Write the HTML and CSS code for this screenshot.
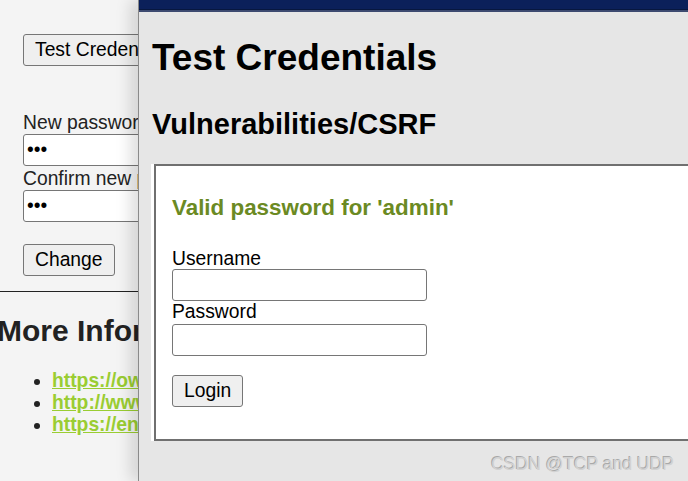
FILE: index.html
```html
<!DOCTYPE html>
<html>
<head>
<meta charset="utf-8">
<link rel="stylesheet" href="styles.css">
</head>
<body>
<div class="page">
  <div class="form">
    <button class="btn btn-test">Test Credentials</button>
    <label class="lbl lbl-first">New password:</label>
    <input class="inp" type="password" value="abc">
    <label class="lbl">Confirm new password:</label>
    <input class="inp" type="password" value="abc">
    <button class="btn btn-change">Change</button>
  </div>
  <hr class="rule">
  <h2 class="more">More Information</h2>
  <ul class="links">
    <li><a href="#">https://owasp.org/www-community/attacks/csrf</a></li>
    <li><a href="#">http://www.cgisecurity.com/csrf-faq.html</a></li>
    <li><a href="#">https://en.wikipedia.org/wiki/Cross-site_request_forgery</a></li>
  </ul>
</div>

<div class="popup">
  <div class="topbar"></div>
  <div class="popup-body">
    <h1 class="title">Test Credentials</h1>
    <h2 class="sub">Vulnerabilities/CSRF</h2>
    <div class="area">
      <div class="ok">Valid password for 'admin'</div>
      <label class="lbl lbl-user">Username</label>
      <input class="inp inp-user" type="text">
      <label class="lbl lbl-pass">Password</label>
      <input class="inp inp-pass" type="password">
      <button class="btn btn-login">Login</button>
    </div>
  </div>
  <div class="watermark">CSDN @TCP and UDP</div>
</div>
</body>
</html>
```

FILE: styles.css
```css
html, body {
  margin: 0;
  padding: 0;
  height: 100%;
}
body {
  background: #f4f4f4;
  font-family: "Liberation Sans", Arial, sans-serif;
  font-size: 19.3px;
  color: #222;
  overflow: hidden;
  position: relative;
}
.page {
  padding-top: 34px;
}
.form {
  display: flex;
  flex-direction: column;
  align-items: flex-start;
  padding-left: 23px;
}
.btn {
  font-family: "Liberation Sans", Arial, sans-serif;
  font-size: 19.3px;
  color: #000;
  height: 32px;
  padding: 0 11px;
  background: #efefef;
  border: 1px solid #767676;
  border-radius: 3px;
  white-space: nowrap;
}
.lbl {
  display: block;
  line-height: 20px;
  height: 20px;
  margin-top: 3px;
  white-space: nowrap;
}
.lbl-first { margin-top: 47px; }
.inp {
  display: block;
  box-sizing: border-box;
  width: 255px;
  height: 32px;
  margin-top: 1px;
  padding: 0 3px;
  font-family: "Liberation Sans", Arial, sans-serif;
  font-size: 19.3px;
  background: #fff;
  border: 1px solid #767676;
  border-radius: 3px;
}
.btn-change { margin-top: 22px; }
.rule {
  margin: 15px 0 0 0;
  border: 0;
  border-top: 1px solid #222;
  height: 0;
}
.more {
  margin: 22px 0 0 -3px;
  font-size: 30px;
  line-height: 34px;
  font-weight: bold;
  color: #222;
  white-space: nowrap;
}
.links {
  margin: 22px 0 0 0;
  padding-left: 52px;
  line-height: 22px;
}
.links a {
  color: #9acd32;
  font-weight: bold;
  white-space: nowrap;
}

.popup {
  position: absolute;
  left: 138px;
  top: 0;
  right: 0;
  bottom: 0;
  background: #e6e6e6;
  border-left: 1px solid #8a8a8a;
  box-shadow: -8px 0 14px rgba(0, 0, 0, 0.13);
  overflow: hidden;
}
.topbar {
  height: 9px;
  background: #0b205a;
  border-bottom: 1px solid #07173f;
  box-shadow: 0 2px 0 #3d4a70;
}
.popup-body {
  padding: 27px 0 0 13px;
}
.title {
  margin: 0;
  font-size: 37px;
  line-height: 42px;
  font-weight: bold;
  color: #000;
  white-space: nowrap;
}
.sub {
  margin: 28px 0 0 0;
  font-size: 29px;
  line-height: 34px;
  font-weight: bold;
  color: #000;
  white-space: nowrap;
}
.area {
  margin: 23px -40px 0 2px;
  padding: 29px 0 32px 16px;
  background: #fff;
  border: 2px solid #707070;
  box-shadow: -3px 0 0 #fff;
}
.ok {
  font-size: 22.4px;
  line-height: 26px;
  font-weight: bold;
  color: #6b8a23;
}
.lbl-user { margin-top: 28px; color: #000; }
.inp-user { margin-top: 0; }
.lbl-pass { margin-top: 1px; color: #000; }
.inp-pass { margin-top: 2px; }
.btn-login { margin-top: 19px; }
.watermark {
  position: absolute;
  right: 14px;
  top: 454px;
  font-size: 17.5px;
  color: #d2d2d2;
  text-shadow: -1px -1px 0 #a9a9a9;
  white-space: nowrap;
}
```
